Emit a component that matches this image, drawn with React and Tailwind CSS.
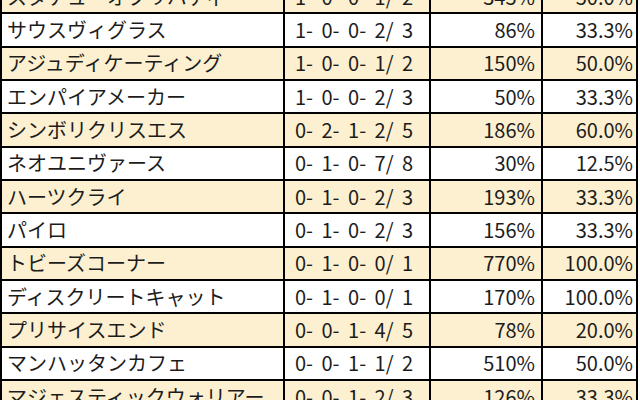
import React from 'react';

const rows = [
    ['スタチューオブリバティ', '1- 0- 0- 1/ 2', '345%', '50.0%'],
    ['サウスヴィグラス', '1- 0- 0- 2/ 3', '86%', '33.3%'],
    ['アジュディケーティング', '1- 0- 0- 1/ 2', '150%', '50.0%'],
    ['エンパイアメーカー', '1- 0- 0- 2/ 3', '50%', '33.3%'],
    ['シンボリクリスエス', '0- 2- 1- 2/ 5', '186%', '60.0%'],
    ['ネオユニヴァース', '0- 1- 0- 7/ 8', '30%', '12.5%'],
    ['ハーツクライ', '0- 1- 0- 2/ 3', '193%', '33.3%'],
    ['パイロ', '0- 1- 0- 2/ 3', '156%', '33.3%'],
    ['トビーズコーナー', '0- 1- 0- 0/ 1', '770%', '100.0%'],
    ['ディスクリートキャット', '0- 1- 0- 0/ 1', '170%', '100.0%'],
    ['プリサイスエンド', '0- 0- 1- 4/ 5', '78%', '20.0%'],
    ['マンハッタンカフェ', '0- 0- 1- 1/ 2', '510%', '50.0%'],
    ['マジェスティックウォリアー', '0- 0- 1- 2/ 3', '126%', '33.3%'],
];

export default function App() {
    return (
        <div className="h-[400px] w-[640px] overflow-hidden bg-white text-[#1c1c1c] text-[20px] leading-none [font-family:'Noto_Sans_CJK_JP',sans-serif]">
            <div className="-mt-[19px] w-[638px] border-l-2 border-black">
                {rows.map(([name, record, rate, win], i) => (
                    <div
                        key={name}
                        className={`flex h-[33.33px] border-b-2 border-black ${i % 2 === 0 ? 'bg-[#fdf0d0]' : 'bg-white'}`}
                    >
                        <div className="w-[283px] border-r-2 border-black pl-[5px] flex items-center">{name}</div>
                        <div className="w-[146px] border-r-2 border-black pl-[10px] flex items-center whitespace-pre [word-spacing:4px]">{record}</div>
                        <div className="w-[112px] border-r-2 border-black pr-[6px] flex items-center justify-end">{rate}</div>
                        <div className="w-[95px] border-r-2 border-black pr-[3px] flex items-center justify-end">{win}</div>
                    </div>
                ))}
            </div>
        </div>
    );
}
